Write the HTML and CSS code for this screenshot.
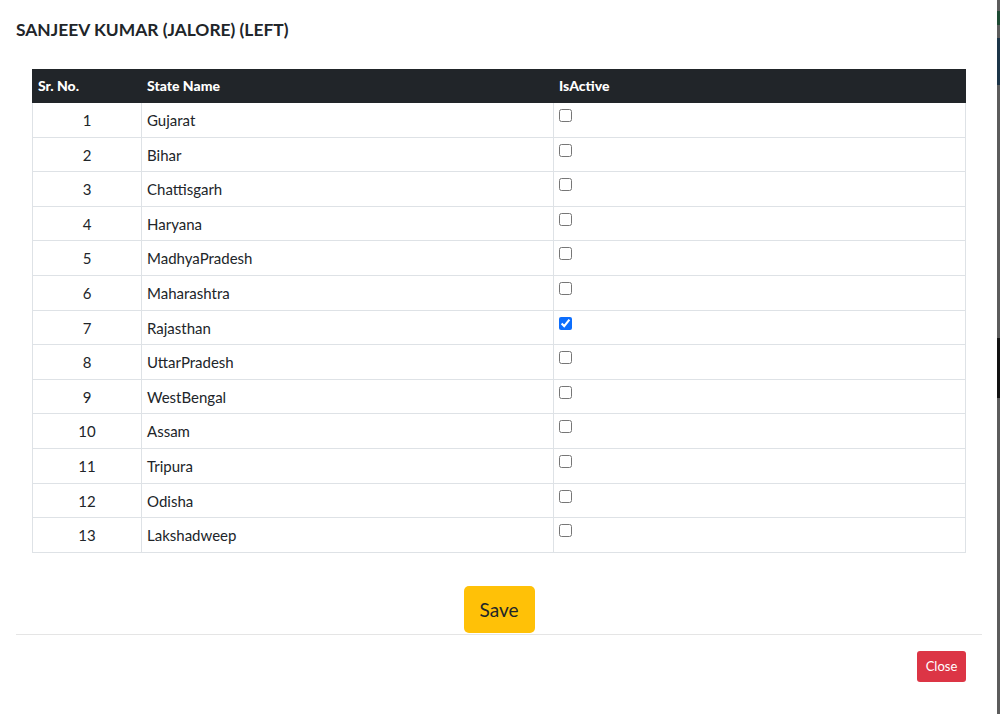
FILE: index.html
```html
<!DOCTYPE html>
<html>
<head>
<meta charset="utf-8">
<link rel="stylesheet" href="styles.css">
</head>
<body>
<div class="page">
  <div class="modal">
    <h5 class="title">SANJEEV KUMAR (JALORE) (LEFT)</h5>
    <div class="body">
      <table class="grid">
        <colgroup><col class="c1"><col class="c2"><col class="c3"></colgroup>
        <thead>
          <tr><th>Sr. No.</th><th>State Name</th><th>IsActive</th></tr>
        </thead>
        <tbody>
          <tr><td class="num">1</td><td>Gujarat</td><td><input type="checkbox"></td></tr>
          <tr><td class="num">2</td><td>Bihar</td><td><input type="checkbox"></td></tr>
          <tr><td class="num">3</td><td>Chattisgarh</td><td><input type="checkbox"></td></tr>
          <tr><td class="num">4</td><td>Haryana</td><td><input type="checkbox"></td></tr>
          <tr><td class="num">5</td><td>MadhyaPradesh</td><td><input type="checkbox"></td></tr>
          <tr><td class="num">6</td><td>Maharashtra</td><td><input type="checkbox"></td></tr>
          <tr><td class="num">7</td><td>Rajasthan</td><td><input type="checkbox" checked></td></tr>
          <tr><td class="num">8</td><td>UttarPradesh</td><td><input type="checkbox"></td></tr>
          <tr><td class="num">9</td><td>WestBengal</td><td><input type="checkbox"></td></tr>
          <tr><td class="num">10</td><td>Assam</td><td><input type="checkbox"></td></tr>
          <tr><td class="num">11</td><td>Tripura</td><td><input type="checkbox"></td></tr>
          <tr><td class="num">12</td><td>Odisha</td><td><input type="checkbox"></td></tr>
          <tr><td class="num">13</td><td>Lakshadweep</td><td><input type="checkbox"></td></tr>
        </tbody>
      </table>
      <div class="actions"><button class="btn-save">Save</button></div>
    </div>
    <div class="footer"><button class="btn-close">Close</button></div>
  </div>
  <div class="edge">
    <div class="seg s1"></div>
    <div class="seg s2"></div>
    <div class="seg s3"></div>
  </div>
</div>
</body>
</html>
```

FILE: styles.css
```css
* { box-sizing: border-box; }
html, body { margin: 0; padding: 0; background: #fff; }
body {
  font-family: Lato, "Open Sans", "Liberation Sans", sans-serif;
  color: #212529;
}
.page { display: flex; width: 1000px; height: 714px; overflow: hidden; }
.modal { width: 997px; background: #fff; padding: 0 15px 0 16px; }
.title {
  margin: 0;
  height: 53px;
  padding-top: 19px;
  font-size: 17.4px;
  line-height: 22px;
  font-weight: 700;
  color: #212529;
}
.body { padding: 16px 16px 0; }
.grid {
  width: 934px;
  border-collapse: collapse;
  table-layout: fixed;
  font-size: 15px;
}
.grid .c1 { width: 109px; }
.grid .c2 { width: 412px; }
.grid thead tr { height: 33px; }
.grid th {
  background: #212529;
  color: #fff;
  font-size: 14px;
  font-weight: 900;
  text-align: left;
  padding: 0 5px;
  border: 1px solid #212529;
  border-left-color: #dee2e6;
  vertical-align: middle;
  line-height: 20px;
}
.grid th:first-child { border-left-color: #212529; }
.grid tbody tr { height: 34.6px; }
.grid td {
  border: 1px solid #dee2e6;
  padding: 6px 5px 5px;
  line-height: 22px;
  vertical-align: top;
}
.grid td.num { text-align: center; }
.grid input[type=checkbox] {
  margin: 0;
  width: 13px;
  height: 13px;
  vertical-align: top;
  accent-color: #0d6efd;
}
.actions { padding-top: 33px; height: 81px; text-align: center; }
.btn-save {
  width: 71px;
  height: 47px;
  border: none;
  border-radius: 5px;
  background: #ffc107;
  color: #212529;
  font-family: inherit;
  font-size: 19px;
  padding: 0;
}
.footer {
  border-top: 1px solid #e5e5e5;
  display: flex;
  justify-content: flex-end;
  padding: 16px 16px 0 0;
}
.btn-close {
  width: 49px;
  height: 31px;
  border: none;
  border-radius: 3px;
  background: #dc3545;
  color: #fff;
  font-family: inherit;
  font-size: 13px;
  padding: 0;
}
.edge { width: 3px; background: #5c5c5c; display: flex; flex-direction: column; }
.seg { width: 3px; }
.s1 { margin-top: 11px; height: 14px; background: #1e4a33; }
.s2 { margin-top: 13px; height: 47px; background: #1c3548; }
.s3 { margin-top: 253px; height: 60px; background: #111; }
```
